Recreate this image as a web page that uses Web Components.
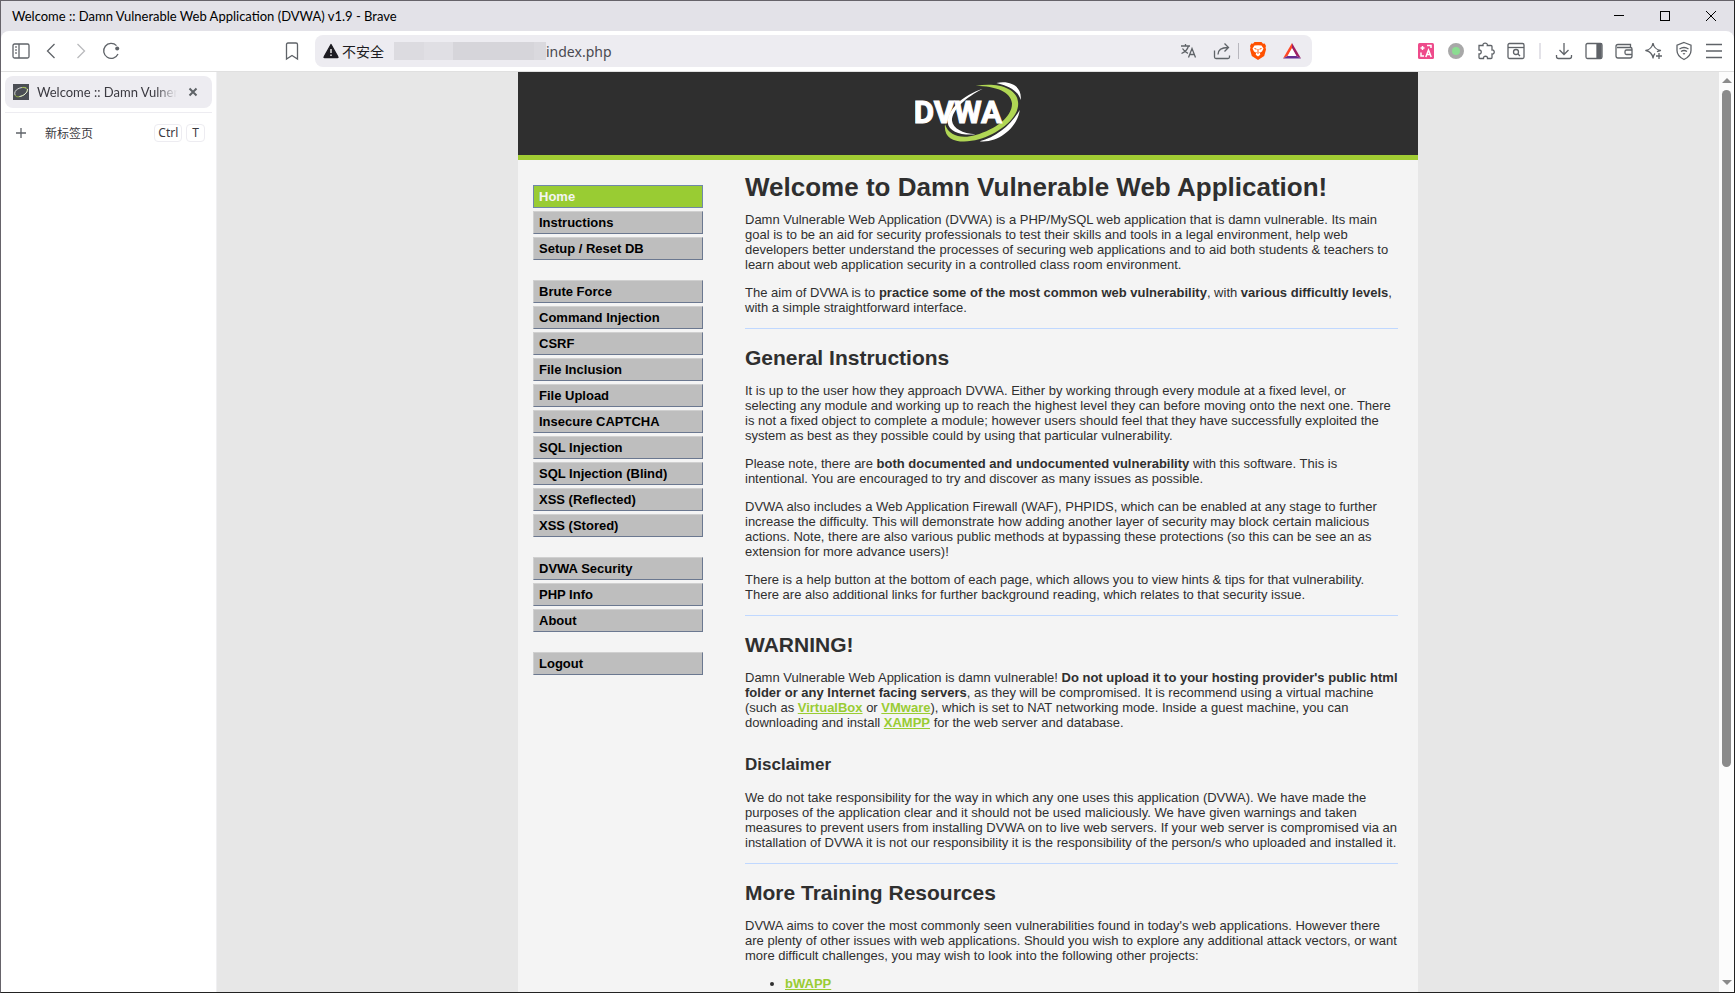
<!DOCTYPE html>
<html lang="zh-CN">
<head>
<meta charset="utf-8">
<title>Welcome :: Damn Vulnerable Web Application (DVWA) v1.9</title>
<style>
  html, body {
    margin: 0;
    height: 100%;
    overflow: hidden;
  }
</style>
</head>
<body>
<browser-window>
  <window-title slot="title">Welcome :: Damn Vulnerable Web Application (DVWA) v1.9 - Brave</window-title>
  <browser-toolbar slot="toolbar"></browser-toolbar>
  <tab-sidebar slot="tabs">Welcome :: Damn Vulnerable Web Application</tab-sidebar>
  <dvwa-page slot="page">
    <dvwa-header slot="header"></dvwa-header>
    <dvwa-menu slot="menu"></dvwa-menu>
    <dvwa-home slot="content"></dvwa-home>
  </dvwa-page>
  <scroll-bar slot="scroll"></scroll-bar>
</browser-window>

<script>
const ICONS = {
  sidebar: '<rect x="2" y="3" width="16" height="14" rx="1.5"/><path d="M8 3v14M4.2 6h1.6M4.2 9h1.6M4.2 12h1.6"/>',
  back: '<path d="M13.5 3 6.5 10l7 7"/>',
  forward: '<path d="M6.5 3l7 7-7 7" stroke="#b9babd"/>',
  reload: '<path d="M15.5 4.6A7.5 7.5 0 1 0 17 13"/><path d="M16.5 7.5V6" /><circle cx="16.2" cy="7.6" r="2" fill="#5f6368" stroke="none"/>',
  bookmark: '<path d="M4.5 3.5q0-1.5 1.5-1.5h8q1.500 0 1.500 1.500V18L10 14.500 4.500 18z"/>',
  translate: '<path d="M3 5h9M7.500 3v2M10.500 5C9.500 8.500 7 11 3.500 12.500M4.500 7.500c1.500 2.500 3 3.800 5.500 4.800M10.500 16.500l3.500-9 3.500 9M11.800 13.500h4.500"/>',
  share: '<path d="M2.500 9.500V16q0 1.500 1.500 1.500h12q1.500 0 1.500-1.500v-1.500M6 13.500C6 9 9 6.500 16 6.500M12.500 2.500l4 4-4 4"/>',
  brave: '<path d="M6.500 1h7l1.500 1.700 1.700-.2 1.300 2.500-.5 1.500.5 2-1.800 6.500L10 19l-6.200-4L2 8.500l.5-2L2 5l1.300-2.500 1.700.2z" fill="#ff5000" stroke="none"/><path d="M6.500 4.500 10 4.200l3.500.3 2 3-1.500 3-2.200 1.200.5 2L10 15.500l-2.300-1.800.5-2L6 10.500l-1.500-3z" fill="#fff" stroke="none"/><path d="M6.500 7.500l2 .7M13.500 7.500l-2 .7M10 8v3M8.500 11.500l1.500.7 1.500-.7" stroke="#ff5000" stroke-width="1"/>',
  bat: '<g stroke="none"><path d="M10 2 1 17.500 5.500 15 10 7z" fill="#ff4724"/><path d="M10 2l9 15.500-4.500-2.500L10 7z" fill="#9e1f63"/><path d="M1 17.500h18L14.500 15h-9z" fill="#662d91"/><path d="M10 7.500 5.800 15h8.400z" fill="#fff"/></g>',
  lingo: '<rect x="2" y="2" width="16" height="16" rx="1.500" fill="#ee4b8b" stroke="none"/><g stroke="#fff" stroke-width="1.500"><path d="M4.500 7h4M6.500 5v4M11 4.500h4v2.500M5 11.500v3.500h3M9.800 16l2.700-7 2.700 7M11 13.500h3"/></g>',
  dot: '<circle cx="10" cy="10" r="6" fill="#8bdd91" stroke="#a8a8a8" stroke-width="4"/>',
  puzzle: '<path d="M3 4.500h4c-.7-3.300 5-3.300 4.300 0H15q1 0 1 1V9c3-.6 3 4.600 0 4v3.500q0 1-1 1h-3.500c.5-3-4.500-3-4 0H4q-1 0-1-1V13c3 .3 3-4.300 0-4z"/>',
  search: '<path d="M2 6.500h16"/><rect x="2" y="2.500" width="16" height="15" rx="1.500"/><circle cx="10" cy="11" r="2.500"/><path d="M12 13l2 2"/>',
  download: '<path d="M10 2v11M5.500 9l4.500 4.500L14.500 9M2.500 14v1.500q0 2 2 2h11q2 0 2-2V14"/>',
  panel: '<rect x="2" y="2.500" width="16" height="15" rx="1.500"/><path d="M13 3h4v14h-4z" fill="#5f6368"/>',
  wallet: '<path d="M3 6.500h13.500q1.500 0 1.500 1.500v7q0 2-2 2H4q-2 0-2-2V5.500Q2 3.500 4 3.500h12.500V6.500M18 9h-5.500q-1.500 0-1.500 1.500v1.500q0 1.500 1.500 1.500H18"/>',
  sparkle: '<path d="M9 2q1.200 6.500 7.500 7.500-2 .4-3.500 1.200M11 12.500Q9.500 14 9 17 7.800 10.700 1.800 9.500 7.800 8.300 9 2M15 12v6M12 15h6" stroke-linejoin="round"/>',
  vpn: '<path d="M10 1.500l7 2.700v5.300q0 5.500-7 9-7-3.500-7-9V4.200z"/><path d="M5.500 8q4.500-3 9 0M7 10.500q3-2 6 0M9 13q1-.7 2 0"/>',
  menu: '<path d="M2 3.500h16M2 10h16M2 16.500h16"/>',
  warning: '<path d="M10 3.500 17 16q.3.500-.500.500h-13q-.800 0-.500-.500z" fill="#1d1c22" stroke="#1d1c22" stroke-linejoin="round"/><path d="M10 8v4M10 13.500v1.500" stroke="#fff"/>',
  close: '<path d="M6.500 6.500l7 7M13.500 6.500l-7 7" stroke-width="2"/>',
  plus: '<path d="M10 5v10M5 10h10"/>',
  minimize: '<path d="M5 9.500h10" stroke="#000" stroke-width="1"/>',
  maximize: '<rect x="5.500" y="5.500" width="9" height="9" stroke="#000" stroke-width="1"/>',
  exit: '<path d="M5 5l10 10M15 5 5 15" stroke="#000" stroke-width="1"/>'
};

class ChromeIcon extends HTMLElement {
  constructor() {
    super();
    this.attachShadow({ mode: 'open' });
  }

  connectedCallback() {
    this.shadowRoot.innerHTML = `
      <style>
        :host { display: block; width: 20px; height: 20px; }
        svg { display: block; }
      </style>
      <svg viewBox="0 0 20 20" width="20" height="20" fill="none" stroke="#5f6368" stroke-width="1.300" aria-hidden="true">${ICONS[this.getAttribute('name')]}</svg>
    `;
  }
}

class BrowserWindow extends HTMLElement {
  constructor() {
    super();
    this.attachShadow({ mode: 'open' }).innerHTML = `
      <style>
        :host {
          display: flex;
          flex-direction: column;
          box-sizing: border-box;
          height: 100vh;
          border: 1px solid #66636a;
          border-right-color: #222;
          border-bottom-color: #222;
          background: #e3e2e8;
          font-family: "Noto Sans", "Noto Sans CJK SC", sans-serif;
          font-size: 12px;
          color: #1d1c22;
        }

        .body {
          flex: 1;
          min-height: 0;
          display: grid;
          grid-template-columns: 216px 1fr 15px;
          border-top: 1px solid #e0e0e0;
          background: #fff;
        }

        .page {
          overflow: hidden;
          min-height: 0;
          background: #e7e7e7;
        }
      </style>
      <slot name="title"></slot>
      <slot name="toolbar"></slot>
      <div class="body">
        <slot name="tabs"></slot>
        <div class="page"><slot name="page"></slot></div>
        <slot name="scroll"></slot>
      </div>
    `;
  }
}

class WindowTitle extends HTMLElement {
  constructor() {
    super();
    this.attachShadow({ mode: 'open' }).innerHTML = `
      <style>
        :host {
          display: flex;
          justify-content: space-between;
          align-items: center;
          height: 30px;
          padding-left: 11px;
          font-family: Lato, "Noto Sans", sans-serif;
          font-size: 13px;
          color: #000;
        }

        .controls { display: flex; }

        button {
          display: grid;
          place-items: center;
          width: 46px;
          height: 30px;
          padding: 0;
          border: 0;
          background: none;
        }
      </style>
      <span><slot></slot></span>
      <div class="controls">
        <button aria-label="最小化"><chrome-icon name="minimize"></chrome-icon></button>
        <button aria-label="最大化"><chrome-icon name="maximize"></chrome-icon></button>
        <button aria-label="关闭"><chrome-icon name="exit"></chrome-icon></button>
      </div>
    `;
  }
}

class BrowserToolbar extends HTMLElement {
  constructor() {
    super();
    this.attachShadow({ mode: 'open' });
  }

  connectedCallback() {
    this.render();
  }

  buttons(names) {
    return names.map((name) => `<button aria-label="${name}"><chrome-icon name="${name}"></chrome-icon></button>`).join('');
  }

  render() {
    this.shadowRoot.innerHTML = `
      <style>
        :host {
          display: flex;
          align-items: center;
          height: 40px;
          padding: 0 5px;
          background: #fff;
          border-radius: 8px 8px 0 0;
        }

        button {
          display: grid;
          place-items: center;
          width: 30px;
          height: 30px;
          padding: 0;
          border: 0;
          background: none;
        }

        .group { display: flex; align-items: center; }
        .before { flex: 151; }
        .after { flex: 99; }

        .location {
          flex: 1035;
          display: flex;
          align-items: center;
          gap: 8px;
          min-width: 0;
        }

        .address {
          flex: 1;
          display: flex;
          align-items: center;
          height: 32px;
          padding: 0 5px 0 6px;
          border-radius: 8px;
          background: #edecf1;
          min-width: 0;
          box-sizing: border-box;
        }

        .address label {
          padding: 0 10px 0 1px;
          font-size: 14px;
          white-space: nowrap;
        }

        .masked {
          width: 152px;
          height: 18px;
          background: linear-gradient(90deg, #dcdbe0 0 20%, #e0dfe4 20% 39%, #d6d5da 39% 92%, #dad9de 92%);
        }

        input {
          flex: 1;
          min-width: 0;
          padding: 0;
          border: 0;
          outline: 0;
          background: none;
          font: inherit;
          font-size: 14px;
          color: #4a4950;
        }

        .address .group { gap: 4px; }
        .rule { width: 1px; height: 16px; margin-left: -3px; background: #b8b7be; }
        .split { width: 2px; height: 16px; margin: 0 8px; background: #e3e2e8; }
      </style>
      <div class="group">${this.buttons(['sidebar', 'back', 'forward', 'reload'])}</div>
      <div class="before"></div>
      <div class="location">
        ${this.buttons(['bookmark'])}
        <div class="address">
          <chrome-icon name="warning"></chrome-icon>
          <label for="url">不安全</label>
          <span class="masked"></span>
          <input id="url" type="text" value="index.php">
          <div class="group">
            ${this.buttons(['translate', 'share'])}
            <span class="rule"></span>
            ${this.buttons(['brave', 'bat'])}
          </div>
        </div>
      </div>
      <div class="after"></div>
      <div class="group">
        ${this.buttons(['lingo', 'dot', 'puzzle', 'search'])}
        <span class="split"></span>
        ${this.buttons(['download', 'panel', 'wallet', 'sparkle', 'vpn', 'menu'])}
      </div>
    `;
  }
}

class TabSidebar extends HTMLElement {
  constructor() {
    super();
    this.attachShadow({ mode: 'open' }).innerHTML = `
      <style>
        :host {
          display: block;
          box-sizing: border-box;
          padding: 4px;
          border-right: 1px solid #f0f0f2;
          background: #fff;
        }

        button {
          padding: 0;
          border: 0;
          background: none;
          font: inherit;
          color: #3b3a41;
        }

        .tab {
          display: flex;
          align-items: center;
          height: 32px;
          padding: 0 9px 0 8px;
          border-radius: 8px;
          background: #edecf1;
          color: #3b3a41;
        }

        .title {
          flex: 1;
          margin: 0 6px 0 8px;
          overflow: hidden;
          font-family: Lato, "Noto Sans", sans-serif;
          font-size: 13px;
          white-space: nowrap;
          -webkit-mask-image: linear-gradient(90deg, #000 85%, transparent);
          mask-image: linear-gradient(90deg, #000 85%, transparent);
        }

        hr {
          margin: 4px 0;
          border: 0;
          border-top: 1px solid #edecf1;
        }

        .new {
          display: flex;
          align-items: center;
          width: 100%;
          height: 32px;
          padding: 0 7px 0 6px;
        }

        .new span {
          flex: 1;
          padding-left: 14px;
          text-align: left;
        }

        kbd {
          margin-left: 4px;
          padding: 0 3px;
          border: 1px solid #edecf1;
          border-radius: 4px;
          font: inherit;
          line-height: 16px;
        }

        kbd:last-child { padding: 0 5px; }
      </style>
      <div class="tab">
        <svg width="16" height="16" viewBox="0 0 16 16" fill="none" aria-hidden="true">
          <path d="M0 0h16v16H0z" fill="#4b4e55"/>
          <path d="M2 11C0 6 8 2 13 4" stroke="#d5d8d6"/>
          <path d="M9 3.500c6-1 7 3 3 6.500-4 3-9 4-10 1" stroke="#9bb845"/>
          <path d="M14.500 5c0 4-4 7-8 7.500" stroke="#e5e8e4"/>
        </svg>
        <span class="title"><slot></slot></span>
        <button aria-label="关闭标签页"><chrome-icon name="close"></chrome-icon></button>
      </div>
      <hr>
      <button class="new"><chrome-icon name="plus"></chrome-icon><span>新标签页</span><kbd>Ctrl</kbd><kbd>T</kbd></button>
    `;
  }
}

class ScrollBar extends HTMLElement {
  constructor() {
    super();
    this.attachShadow({ mode: 'open' }).innerHTML = `
      <style>
        :host {
          display: flex;
          flex-direction: column;
          align-items: center;
          background: #fcfcfc;
        }

        svg { flex: none; display: block; }
        .thumb { flex: 677; width: 9px; border-radius: 5px; background: #8b8b8b; }
        .rest { flex: 207; }
      </style>
      <svg width="15" height="18" aria-hidden="true"><path d="M3 11l5-5 5 5z" fill="#8b8b8b"/></svg>
      <div class="thumb"></div>
      <div class="rest"></div>
      <svg width="15" height="18" aria-hidden="true"><path d="M3 6l5 5 5-5z" fill="#8b8b8b"/></svg>
    `;
  }
}

class DvwaPage extends HTMLElement {
  constructor() {
    super();
    this.attachShadow({ mode: 'open' }).innerHTML = `
      <style>
        :host {
          display: block;
          box-sizing: border-box;
          max-width: 900px;
          min-height: 100%;
          margin: 0 auto;
          background: #f4f4f4;
          font-family: "Liberation Sans", Arial, sans-serif;
          font-size: 13px;
          line-height: 15px;
          color: #2f2f2f;
        }

        .columns {
          display: grid;
          grid-template-columns: 170px 1fr;
          gap: 42px;
          padding: 12px 20px 0 15px;
        }
      </style>
      <slot name="header"></slot>
      <div class="columns">
        <slot name="menu"></slot>
        <slot name="content"></slot>
      </div>
    `;
  }
}

class DvwaHeader extends HTMLElement {
  constructor() {
    super();
    this.attachShadow({ mode: 'open' }).innerHTML = `
      <style>
        :host {
          display: flex;
          justify-content: center;
          padding: 10px 0 13px;
          background: #2f2f2f;
          border-bottom: 5px solid #a1cc33;
        }

        text {
          font-family: "Liberation Sans Narrow", Roboto, sans-serif;
          font-size: 94px;
          font-weight: 700;
        }
      </style>
      <svg width="106" height="60" viewBox="108 36 318 180" role="img" aria-label="DVWA">
        <path d="M312 56C250 75 205 120 206 158 210 186 248 197 290 193 250 190 222 175 219 152 218 120 262 80 312 56z" fill="#fff"/>
        <path d="M352 39C395 30 430 50 425 90 418 64 392 48 352 39zM422 120C416 172 360 220 302 214 350 202 396 166 422 120z" fill="#fff"/>
        <path d="M290 48C350 37 412 52 417 95 424 142 360 190 300 208 245 223 192 214 198 163 210 200 250 207 290 195 350 178 400 140 399 100 396 65 350 48 290 48z" fill="#b0d654"/>
        <text x="104" y="160" fill="#fff" stroke="#fff" stroke-width="3">DVWA</text>
      </svg>
    `;
  }
}

class DvwaMenu extends HTMLElement {
  constructor() {
    super();
    this.attachShadow({ mode: 'open' });
    this.blocks = [
      ['Home', 'Instructions', 'Setup / Reset DB'],
      ['Brute Force', 'Command Injection', 'CSRF', 'File Inclusion', 'File Upload', 'Insecure CAPTCHA',
        'SQL Injection', 'SQL Injection (Blind)', 'XSS (Reflected)', 'XSS (Stored)'],
      ['DVWA Security', 'PHP Info', 'About'],
      ['Logout']
    ];
  }

  connectedCallback() {
    const lists = this.blocks.map((block) => `
      <ul>${block.map((item) => `<li><a href="#"${item === 'Home' ? ' class="selected"' : ''}>${item}</a></li>`).join('')}</ul>
    `).join('');

    this.shadowRoot.innerHTML = `
      <style>
        :host { display: block; padding-top: 13px; }

        ul {
          display: grid;
          gap: 3px;
          margin: 0 0 20px;
          padding: 0;
          list-style: none;
        }

        a {
          display: block;
          padding: 3px 5px;
          border: 1px solid #d0d0d0;
          border-right-color: #6b7890;
          border-bottom-color: #6b7890;
          background: #bebebe;
          font-weight: bold;
          color: #000;
          text-decoration: none;
        }

        a.selected {
          border-color: #7088a8;
          background: #9c3;
          color: #f4f4f4;
        }
      </style>
      <nav>${lists}</nav>
    `;
  }
}

class DvwaHome extends HTMLElement {
  constructor() {
    super();
    this.attachShadow({ mode: 'open' }).innerHTML = `
      <style>
        :host { display: block; min-width: 0; }
        h1 { margin: 0 0 10px; font-size: 26px; line-height: 30px; }
        h2 { margin: 0 0 13px; font-size: 21px; line-height: 24px; }
        h3 { margin: 26px 0 16px; font-size: 17px; line-height: 18px; }
        p { margin: 0 0 13px; }
        hr { margin: 0 0 17px; border: 0; border-top: 1px solid #c0d8ff; }
        ul { margin: 0; padding-left: 40px; }
        a { font-weight: bold; color: #9c3; }
      </style>
      <h1>Welcome to Damn Vulnerable Web Application!</h1>
      <p>Damn Vulnerable Web Application (DVWA) is a PHP/MySQL web application that is damn vulnerable. Its main goal is to be an aid for security professionals to test their skills and tools in a legal environment, help web developers better understand the processes of securing web applications and to aid both students &amp; teachers to learn about web application security in a controlled class room environment.</p>
      <p>The aim of DVWA is to <b>practice some of the most common web vulnerability</b>, with <b>various difficultly levels</b>, with a simple straightforward interface.</p>
      <hr>
      <h2>General Instructions</h2>
      <p>It is up to the user how they approach DVWA. Either by working through every module at a fixed level, or selecting any module and working up to reach the highest level they can before moving onto the next one. There is not a fixed object to complete a module; however users should feel that they have successfully exploited the system as best as they possible could by using that particular vulnerability.</p>
      <p>Please note, there are <b>both documented and undocumented vulnerability</b> with this software. This is intentional. You are encouraged to try and discover as many issues as possible.</p>
      <p>DVWA also includes a Web Application Firewall (WAF), PHPIDS, which can be enabled at any stage to further increase the difficulty. This will demonstrate how adding another layer of security may block certain malicious actions. Note, there are also various public methods at bypassing these protections (so this can be see an as extension for more advance users)!</p>
      <p>There is a help button at the bottom of each page, which allows you to view hints &amp; tips for that vulnerability. There are also additional links for further background reading, which relates to that security issue.</p>
      <hr>
      <h2>WARNING!</h2>
      <p>Damn Vulnerable Web Application is damn vulnerable! <b>Do not upload it to your hosting provider's public html folder or any Internet facing servers</b>, as they will be compromised. It is recommend using a virtual machine (such as <a href="#">VirtualBox</a> or <a href="#">VMware</a>), which is set to NAT networking mode. Inside a guest machine, you can downloading and install <a href="#">XAMPP</a> for the web server and database.</p>
      <h3>Disclaimer</h3>
      <p>We do not take responsibility for the way in which any one uses this application (DVWA). We have made the purposes of the application clear and it should not be used maliciously. We have given warnings and taken measures to prevent users from installing DVWA on to live web servers. If your web server is compromised via an installation of DVWA it is not our responsibility it is the responsibility of the person/s who uploaded and installed it.</p>
      <hr>
      <h2>More Training Resources</h2>
      <p>DVWA aims to cover the most commonly seen vulnerabilities found in today's web applications. However there are plenty of other issues with web applications. Should you wish to explore any additional attack vectors, or want more difficult challenges, you may wish to look into the following other projects:</p>
      <ul>
        <li><a href="#">bWAPP</a></li>
      </ul>
    `;
  }
}

customElements.define('chrome-icon', ChromeIcon);
customElements.define('browser-window', BrowserWindow);
customElements.define('window-title', WindowTitle);
customElements.define('browser-toolbar', BrowserToolbar);
customElements.define('tab-sidebar', TabSidebar);
customElements.define('scroll-bar', ScrollBar);
customElements.define('dvwa-page', DvwaPage);
customElements.define('dvwa-header', DvwaHeader);
customElements.define('dvwa-menu', DvwaMenu);
customElements.define('dvwa-home', DvwaHome);
</script>
</body>
</html>
